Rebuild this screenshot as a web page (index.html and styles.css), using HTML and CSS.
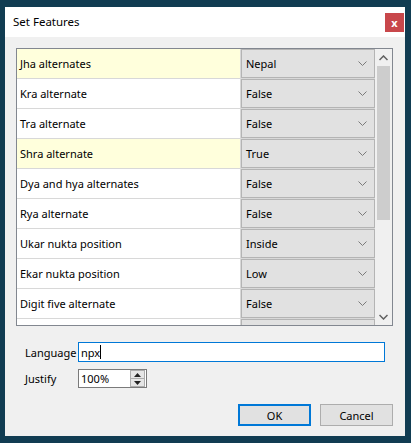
FILE: index.html
```html
<!DOCTYPE html>
<html>
<head>
<meta charset="utf-8">
<link rel="stylesheet" href="styles.css">
</head>
<body>
<div class="dialog">
  <div class="titlebar">
    <span class="title">Set Features</span>
    <span class="close">x</span>
  </div>
  <div class="content">
    <div class="table">
      <div class="rows">
        <div class="row hl"><div class="name">Jha alternates</div><div class="val"><div class="combo"><span>Nepal</span><svg width="9" height="5" viewBox="0 0 9 5"><path d="M0.5 0.5 L4.5 4.5 L8.5 0.5" fill="none" stroke="#7a7a7a" stroke-width="1"/></svg></div></div></div>
        <div class="row"><div class="name">Kra alternate</div><div class="val"><div class="combo"><span>False</span><svg width="9" height="5" viewBox="0 0 9 5"><path d="M0.5 0.5 L4.5 4.5 L8.5 0.5" fill="none" stroke="#7a7a7a" stroke-width="1"/></svg></div></div></div>
        <div class="row"><div class="name">Tra alternate</div><div class="val"><div class="combo"><span>False</span><svg width="9" height="5" viewBox="0 0 9 5"><path d="M0.5 0.5 L4.5 4.5 L8.5 0.5" fill="none" stroke="#7a7a7a" stroke-width="1"/></svg></div></div></div>
        <div class="row hl"><div class="name">Shra alternate</div><div class="val"><div class="combo"><span>True</span><svg width="9" height="5" viewBox="0 0 9 5"><path d="M0.5 0.5 L4.5 4.5 L8.5 0.5" fill="none" stroke="#7a7a7a" stroke-width="1"/></svg></div></div></div>
        <div class="row"><div class="name">Dya and hya alternates</div><div class="val"><div class="combo"><span>False</span><svg width="9" height="5" viewBox="0 0 9 5"><path d="M0.5 0.5 L4.5 4.5 L8.5 0.5" fill="none" stroke="#7a7a7a" stroke-width="1"/></svg></div></div></div>
        <div class="row"><div class="name">Rya alternate</div><div class="val"><div class="combo"><span>False</span><svg width="9" height="5" viewBox="0 0 9 5"><path d="M0.5 0.5 L4.5 4.5 L8.5 0.5" fill="none" stroke="#7a7a7a" stroke-width="1"/></svg></div></div></div>
        <div class="row"><div class="name">Ukar nukta position</div><div class="val"><div class="combo"><span>Inside</span><svg width="9" height="5" viewBox="0 0 9 5"><path d="M0.5 0.5 L4.5 4.5 L8.5 0.5" fill="none" stroke="#7a7a7a" stroke-width="1"/></svg></div></div></div>
        <div class="row"><div class="name">Ekar nukta position</div><div class="val"><div class="combo"><span>Low</span><svg width="9" height="5" viewBox="0 0 9 5"><path d="M0.5 0.5 L4.5 4.5 L8.5 0.5" fill="none" stroke="#7a7a7a" stroke-width="1"/></svg></div></div></div>
        <div class="row"><div class="name">Digit five alternate</div><div class="val"><div class="combo"><span>False</span><svg width="9" height="5" viewBox="0 0 9 5"><path d="M0.5 0.5 L4.5 4.5 L8.5 0.5" fill="none" stroke="#7a7a7a" stroke-width="1"/></svg></div></div></div>
        <div class="row"><div class="name">&nbsp;</div><div class="val"><div class="combo"><span>&nbsp;</span></div></div></div>
      </div>
      <div class="scrollbar">
        <div class="arrow"><svg width="9" height="6" viewBox="0 0 9 6"><path d="M0.5 5 L4.5 1 L8.5 5" fill="none" stroke="#606060" stroke-width="1.5"/></svg></div>
        <div class="track"><div class="thumb"></div></div>
        <div class="arrow"><svg width="9" height="6" viewBox="0 0 9 6"><path d="M0.5 1 L4.5 5 L8.5 1" fill="none" stroke="#606060" stroke-width="1.5"/></svg></div>
      </div>
    </div>
    <div class="form">
      <div class="frow">
        <label class="lbl">Language</label>
        <div class="input"><span>npx</span><span class="caret"></span></div>
      </div>
      <div class="frow">
        <label class="lbl">Justify</label>
        <div class="spin"><span class="spintext">100%</span><div class="spinbtns"><div class="sb"><svg width="7" height="4" viewBox="0 0 7 4"><path d="M0 4 L3.5 0 L7 4Z" fill="#222"/></svg></div><div class="sb"><svg width="7" height="4" viewBox="0 0 7 4"><path d="M0 0 L3.5 4 L7 0Z" fill="#222"/></svg></div></div></div>
      </div>
    </div>
    <div class="buttons">
      <div class="btn default">OK</div>
      <div class="btn">Cancel</div>
    </div>
  </div>
</div>
</body>
</html>
```
FILE: styles.css
```css
html, body {
  margin: 0;
  padding: 0;
}
body {
  background: #113c52;
  width: 411px;
  height: 443px;
  overflow: hidden;
  font-family: "Noto Sans", "Liberation Sans", sans-serif;
  font-size: 11px;
  color: #000;
}
.dialog {
  margin: 7px 0 0 5px;
  width: 400px;
  height: 429px;
  display: flex;
  flex-direction: column;
  background: #f0f0f0;
}
.titlebar {
  height: 30px;
  background: #fff;
  display: flex;
  align-items: center;
  justify-content: space-between;
  padding: 0 1px 0 8px;
  flex: none;
}
.title {
  font-size: 11.5px;
  margin-top: -2px;
}
.close {
  width: 19px;
  height: 19px;
  background: #c8474b;
  color: #fff;
  display: flex;
  align-items: center;
  justify-content: center;
  font-size: 11px;
  font-weight: bold;
}
.content {
  flex: 1;
  display: flex;
  flex-direction: column;
  padding: 11px 12px 0 11px;
}
.table {
  height: 278px;
  box-sizing: border-box;
  border: 1px solid #828790;
  background: #fff;
  display: flex;
  overflow: hidden;
}
.rows {
  width: 358px;
  overflow: hidden;
}
.row {
  height: 30px;
  box-sizing: border-box;
  border-bottom: 1px solid #d8d8d8;
  display: flex;
}
.row.hl .name {
  background: #ffffdc;
}
.name {
  width: 224px;
  box-sizing: border-box;
  border-right: 1px solid #d8d8d8;
  padding-left: 3px;
  display: flex;
  align-items: center;
}
.val {
  flex: 1;
  display: flex;
}
.combo {
  flex: 1;
  height: 29px;
  box-sizing: border-box;
  border: 1px solid #b4b4b4;
  background: #e1e1e1;
  display: flex;
  align-items: center;
  justify-content: space-between;
  padding: 0 7px 0 4px;
}
.scrollbar {
  width: 17px;
  background: #f0f0f0;
  display: flex;
  flex-direction: column;
}
.arrow {
  height: 17px;
  display: flex;
  align-items: center;
  justify-content: center;
  flex: none;
}
.track {
  flex: 1;
  padding: 0 2px;
}
.thumb {
  height: 154px;
  background: #cdcdcd;
}
.form {
  padding: 16px 0 0 9px;
  display: flex;
  flex-direction: column;
  gap: 7px;
}
.frow {
  display: flex;
  align-items: center;
}
.lbl {
  width: 53px;
  white-space: nowrap;
}
.input {
  width: 307px;
  height: 20px;
  box-sizing: border-box;
  border: 1px solid #0078d7;
  background: #fff;
  display: flex;
  align-items: center;
  padding-left: 2px;
}
.caret {
  width: 1px;
  height: 14px;
  background: #000;
}
.spin {
  width: 69px;
  height: 19px;
  box-sizing: border-box;
  border: 1px solid #7a7a7a;
  background: #fff;
  display: flex;
  align-items: center;
  justify-content: space-between;
  padding-left: 2px;
}
.spinbtns {
  display: flex;
  flex-direction: column;
  width: 15px;
  height: 17px;
  margin-right: 1px;
}
.sb {
  flex: 1;
  background: #e5e5e5;
  border: 1px solid #acacac;
  display: flex;
  align-items: center;
  justify-content: center;
}
.sb + .sb {
  border-top: none;
}
.buttons {
  margin-top: auto;
  margin-bottom: 10px;
  display: flex;
  justify-content: flex-end;
  gap: 9px;
}
.btn {
  width: 73px;
  height: 22px;
  box-sizing: border-box;
  border: 1px solid #adadad;
  background: #e1e1e1;
  display: flex;
  align-items: center;
  justify-content: center;
}
.btn.default {
  border: 2px solid #0078d7;
}
```
